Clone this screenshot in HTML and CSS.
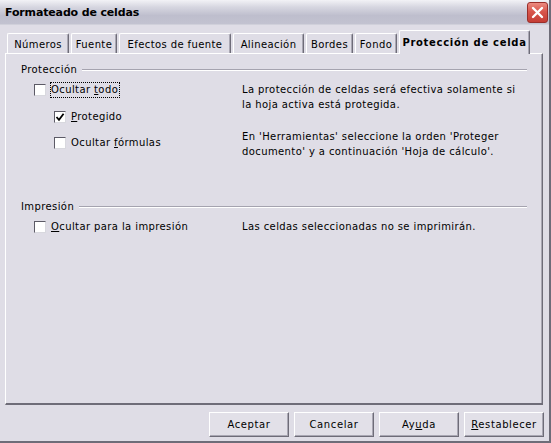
FILE: index.html
```html
<!DOCTYPE html>
<html lang="es">
<head>
<meta charset="utf-8">
<title>Formateado de celdas</title>
<link rel="stylesheet" href="styles.css">
</head>
<body>
<div class="window">
  <div class="titlebar">
    <span class="title">Formateado de celdas</span>
    <span class="close" aria-label="Cerrar">
      <svg width="13" height="13" viewBox="0 0 13 13"><path d="M2 2 L11 11 M11 2 L2 11" stroke="#fff" stroke-width="2.4" stroke-linecap="round"/></svg>
    </span>
  </div>
  <div class="content">
    <div class="tabs">
      <div class="tab">Números</div>
      <div class="tab">Fuente</div>
      <div class="tab">Efectos de fuente</div>
      <div class="tab">Alineación</div>
      <div class="tab">Bordes</div>
      <div class="tab">Fondo</div>
      <div class="tab active">Protección de celda</div>
    </div>
    <div class="panel">
      <div class="group">
        <div class="group-head"><span>Protección</span><span class="rule"></span></div>
        <div class="group-body">
          <div class="options">
            <div class="opt"><span class="cb"></span><span class="lbl focused">Ocultar <u>t</u>odo</span></div>
            <div class="opt sub first-sub"><span class="cb"><svg width="10" height="10" viewBox="0 0 10 10"><path d="M1.5 5 L4 7.8 L8.6 1.8" fill="none" stroke="#000" stroke-width="1.8"/></svg></span><span class="lbl"><u>P</u>rotegido</span></div>
            <div class="opt sub"><span class="cb"></span><span class="lbl">Ocultar <u>f</u>órmulas</span></div>
          </div>
          <div class="desc">
            <p>La protección de celdas será efectiva solamente si la hoja activa está protegida.</p>
            <p>En 'Herramientas' seleccione la orden 'Proteger documento' y a continuación 'Hoja de cálculo'.</p>
          </div>
        </div>
      </div>
      <div class="group second">
        <div class="group-head"><span>Impresión</span><span class="rule"></span></div>
        <div class="group-body">
          <div class="options">
            <div class="opt"><span class="cb"></span><span class="lbl"><u>O</u>cultar para la impresión</span></div>
          </div>
          <div class="desc single">
            <p>Las celdas seleccionadas no se imprimirán.</p>
          </div>
        </div>
      </div>
    </div>
    <div class="buttons">
      <button class="btn">Aceptar</button>
      <button class="btn">Cancelar</button>
      <button class="btn">Ay<u>u</u>da</button>
      <button class="btn"><u>R</u>establecer</button>
    </div>
  </div>
</div>
</body>
</html>
```

FILE: styles.css
```css
* { box-sizing: border-box; }

html, body {
  margin: 0;
  padding: 0;
  background: #dfdde6;
}

body {
  font-family: "DejaVu Sans", sans-serif;
  font-size: 10px;
  letter-spacing: 0.4px;
  color: #000;
}

.window {
  width: 551px;
  height: 443px;
  background: #dfdde6;
  border-right: 2px solid #6e6c78;
  border-bottom: 2px solid #6e6c78;
  display: flex;
  flex-direction: column;
}

.titlebar {
  height: 25px;
  flex: none;
  display: flex;
  align-items: center;
  justify-content: space-between;
  padding: 0 1px 0 5px;
  background: linear-gradient(to bottom, #f2f2f6 0%, #d6d6e0 30%, #bebecd 65%, #c2c2d0 100%);
  border-bottom: 1px solid #d0d0da;
}

.title {
  font-weight: bold;
  font-size: 11px;
  letter-spacing: -0.15px;
}

.close {
  width: 21px;
  height: 21px;
  border-radius: 3px;
  border: 1px solid #9a2e2a;
  background: linear-gradient(to bottom, #ec8a80 0%, #d8564c 45%, #c53d35 100%);
  display: flex;
  align-items: center;
  justify-content: center;
}

.content {
  flex: 1;
  display: flex;
  flex-direction: column;
  padding: 5px 5px 0 5px;
}

.tabs {
  height: 23px;
  display: flex;
  align-items: flex-end;
  gap: 2px;
  padding-left: 2px;
}

.tab {
  height: 20px;
  display: flex;
  align-items: center;
  justify-content: center;
  border-top: 1px solid #fff;
  border-left: 1px solid #fff;
  border-right: 1px solid #6e6c78;
  border-radius: 2px 2px 0 0;
  box-shadow: inset -1px 0 #a9a7b3;
  white-space: nowrap;
  padding-top: 1px;
}

.tab:nth-child(1) { width: 62px; }
.tab:nth-child(2) { width: 46px; }
.tab:nth-child(3) { width: 112px; }
.tab:nth-child(4) { width: 71px; }
.tab:nth-child(5) { width: 47px; }
.tab:nth-child(6) { width: 42px; }

.tab.active {
  width: 131px;
  height: 24px;
  margin-bottom: -1px;
  font-weight: bold;
  letter-spacing: 0.7px;
  background: #dfdde6;
  position: relative;
  z-index: 1;
  padding-bottom: 2px;
}

.panel {
  width: 538px;
  height: 352px;
  flex: none;
  border-top: 1px solid #fff;
  border-left: 1px solid #fff;
  border-right: 1px solid #6e6c78;
  border-bottom: 2px solid #6e6c78;
  box-shadow: inset -1px 0 #a9a7b3;
  padding: 9px 15px 0 15px;
}

.group-head {
  height: 14px;
  display: flex;
  align-items: center;
  line-height: 14px;
}

.rule {
  flex: 1;
  margin-left: 5px;
  height: 2px;
  border-top: 1px solid #a5a3af;
  border-bottom: 1px solid #fff;
}

.group-body {
  display: grid;
  grid-template-columns: 221px 1fr;
  margin-top: 5px;
}

.group.second {
  margin-top: 41px;
}

.options {
  padding-left: 13px;
  display: flex;
  flex-direction: column;
}

.opt {
  height: 16px;
  display: flex;
  align-items: center;
}

.opt + .opt { margin-top: 10px; }
.opt.first-sub { margin-top: 11px; }

.opt.sub { padding-left: 20px; }

.cb {
  width: 12px;
  height: 12px;
  flex: none;
  background: #fff;
  border-top: 1px solid #5c5a66;
  border-left: 1px solid #5c5a66;
  border-right: 1px solid #d8d8de;
  border-bottom: 1px solid #d8d8de;
  display: flex;
  align-items: center;
  justify-content: center;
  margin-right: 5px;
}

.lbl {
  line-height: 14px;
  border: 1px solid transparent;
  padding: 0 1px 0 0;
  margin-left: -1px;
}

.lbl.focused {
  border: 1px dotted #000;
}

u { text-decoration: underline; text-underline-offset: 1px; }

.desc {
  padding-top: 1px;
  line-height: 14.5px;
}

.desc p {
  margin: 0;
  width: 276px;
}

.desc p + p { margin-top: 18px; }

.buttons {
  display: flex;
  justify-content: flex-end;
  gap: 5px;
  margin-top: 7px;
}

.btn {
  width: 80px;
  height: 25px;
  font-family: "DejaVu Sans", sans-serif;
  font-size: 10px;
  letter-spacing: 0.6px;
  color: #000;
  background: #e2e0e8;
  border: 1px solid;
  border-color: #fff #6e6c78 #6e6c78 #fff;
  box-shadow: inset -1px -1px #a9a7b3;
  padding: 0;
}
```
